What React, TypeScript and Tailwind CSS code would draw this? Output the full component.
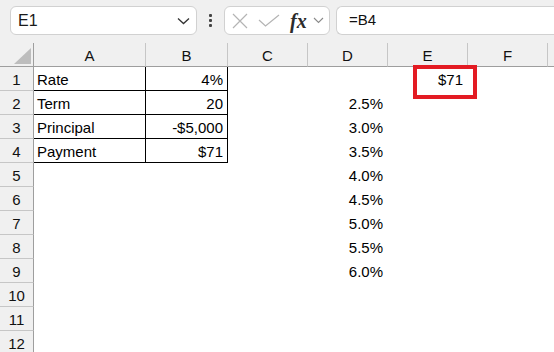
import React from "react";

const cols = [
  { key: "A", w: "w-[112px]" },
  { key: "B", w: "w-[82px]" },
  { key: "C", w: "w-[80px]" },
  { key: "D", w: "w-[80px]" },
  { key: "E", w: "w-[80px]" },
  { key: "F", w: "w-[80px]" },
];

type Cell = { text: string; right?: boolean };

const data: Record<number, Record<string, Cell>> = {
  1: { A: { text: "Rate" }, B: { text: "4%", right: true }, E: { text: "$71", right: true } },
  2: { A: { text: "Term" }, B: { text: "20", right: true }, D: { text: "2.5%", right: true } },
  3: { A: { text: "Principal" }, B: { text: "-$5,000", right: true }, D: { text: "3.0%", right: true } },
  4: { A: { text: "Payment" }, B: { text: "$71", right: true }, D: { text: "3.5%", right: true } },
  5: { D: { text: "4.0%", right: true } },
  6: { D: { text: "4.5%", right: true } },
  7: { D: { text: "5.0%", right: true } },
  8: { D: { text: "5.5%", right: true } },
  9: { D: { text: "6.0%", right: true } },
};

const rows = [1, 2, 3, 4, 5, 6, 7, 8, 9, 10, 11, 12];

function Toolbar() {
  return (
    <div className="h-[43px] flex items-start pt-[6px] pl-[10px]">
      {/* name box */}
      <div className="w-[187px] h-[29px] bg-white border border-[#d1d1d1] rounded-[6px] flex items-center justify-between pl-[7px] pr-[6px]">
        <span className="text-[16px] text-[#1a1a1a]">E1</span>
        <svg width="13" height="8" viewBox="0 0 13 8" fill="none">
          <path d="M1 1.5 L6.5 6.5 L12 1.5" stroke="#333" strokeWidth="1.3" />
        </svg>
      </div>
      {/* dots */}
      <div className="w-[27px] h-[29px] flex flex-col items-center justify-center gap-[2px]">
        <span className="w-[3px] h-[3px] bg-[#444] rounded-[1px]" />
        <span className="w-[3px] h-[3px] bg-[#444] rounded-[1px]" />
        <span className="w-[3px] h-[3px] bg-[#444] rounded-[1px]" />
      </div>
      {/* formula buttons */}
      <div className="w-[106px] h-[29px] bg-white border border-[#d1d1d1] rounded-[6px] flex items-center pl-[7px]">
        <svg width="16" height="16" viewBox="0 0 16 16" fill="none">
          <path d="M1 1 L15 15 M15 1 L1 15" stroke="#b4b4b4" strokeWidth="1.2" />
        </svg>
        <svg className="ml-[10px]" width="22" height="13" viewBox="0 0 22 13" fill="none">
          <path d="M1 6 L7.5 12 L21 1" stroke="#b4b4b4" strokeWidth="1.2" />
        </svg>
        <span
          className="ml-[10px] text-[20px] italic font-bold text-[#2b2b2b] leading-none"
          style={{ fontFamily: '"Liberation Serif", serif' }}
        >
          fx
        </span>
        <svg className="ml-[6px]" width="11" height="7" viewBox="0 0 11 7" fill="none">
          <path d="M1 1 L5.5 5.5 L10 1" stroke="#8a8a8a" strokeWidth="1.1" />
        </svg>
      </div>
      {/* formula bar */}
      <div className="ml-[6px] flex-1 h-[29px] bg-white border border-r-0 border-[#d1d1d1] rounded-l-[6px] flex items-center pl-[12px]">
        <span className="text-[15px] text-[#111]">=B4</span>
      </div>
    </div>
  );
}

function HeaderRow() {
  return (
    <div className="flex h-[24px]">
      <div className="w-[34px] h-[24px] border-r border-b border-r-[#9e9e9e] border-b-[#9e9e9e] relative">
        <svg className="absolute left-[14px] top-[5px]" width="17" height="16" viewBox="0 0 17 16">
          <polygon points="17,0 17,16 0,16" fill="#bdbdbd" />
        </svg>
      </div>
      {cols.map((c) => (
        <div
          key={c.key}
          className={`${c.w} h-[24px] border-r border-b border-r-[#c6c6c6] border-b-[#9e9e9e] text-center leading-[25px] text-[15px] text-[#111]`}
        >
          {c.key}
        </div>
      ))}
      <div className="flex-1 h-[24px] border-b border-b-[#9e9e9e]" />
    </div>
  );
}

function BodyRow({ n }: { n: number }) {
  const rowData = data[n] || {};
  const inTable = n <= 4;
  return (
    <div className="flex h-[24px]">
      <div className="w-[34px] h-[24px] bg-[#f0f0f0] border-r border-b border-r-[#9e9e9e] border-b-[#c6c6c6] text-center leading-[26px] text-[15px] text-[#111]">
        {n}
      </div>
      {cols.map((c) => {
        const cell = rowData[c.key];
        const boxed = inTable && (c.key === "A" || c.key === "B");
        return (
          <div
            key={c.key}
            className={`${c.w} h-[24px] border-r border-b ${
              boxed ? "border-black" : "border-transparent"
            } leading-[26px] text-[15px] text-black whitespace-nowrap ${
              cell?.right ? "text-right pr-[4px]" : "text-left pl-[3px]"
            }`}
          >
            {cell?.text}
          </div>
        );
      })}
      <div className="flex-1 h-[24px]" />
    </div>
  );
}

export default function App() {
  return (
    <div
      className="w-[554px] h-[352px] overflow-hidden relative bg-white"
      style={{ fontFamily: '"Liberation Sans", Arial, sans-serif' }}
    >
      <div className="bg-[#f0f0f0]">
        <Toolbar />
        <HeaderRow />
      </div>
      {rows.map((n) => (
        <BodyRow key={n} n={n} />
      ))}
      {/* highlight annotation */}
      <div className="absolute left-[413px] top-[65px] w-[64px] h-[34px] border-4 border-[#e31b23]" />
    </div>
  );
}
